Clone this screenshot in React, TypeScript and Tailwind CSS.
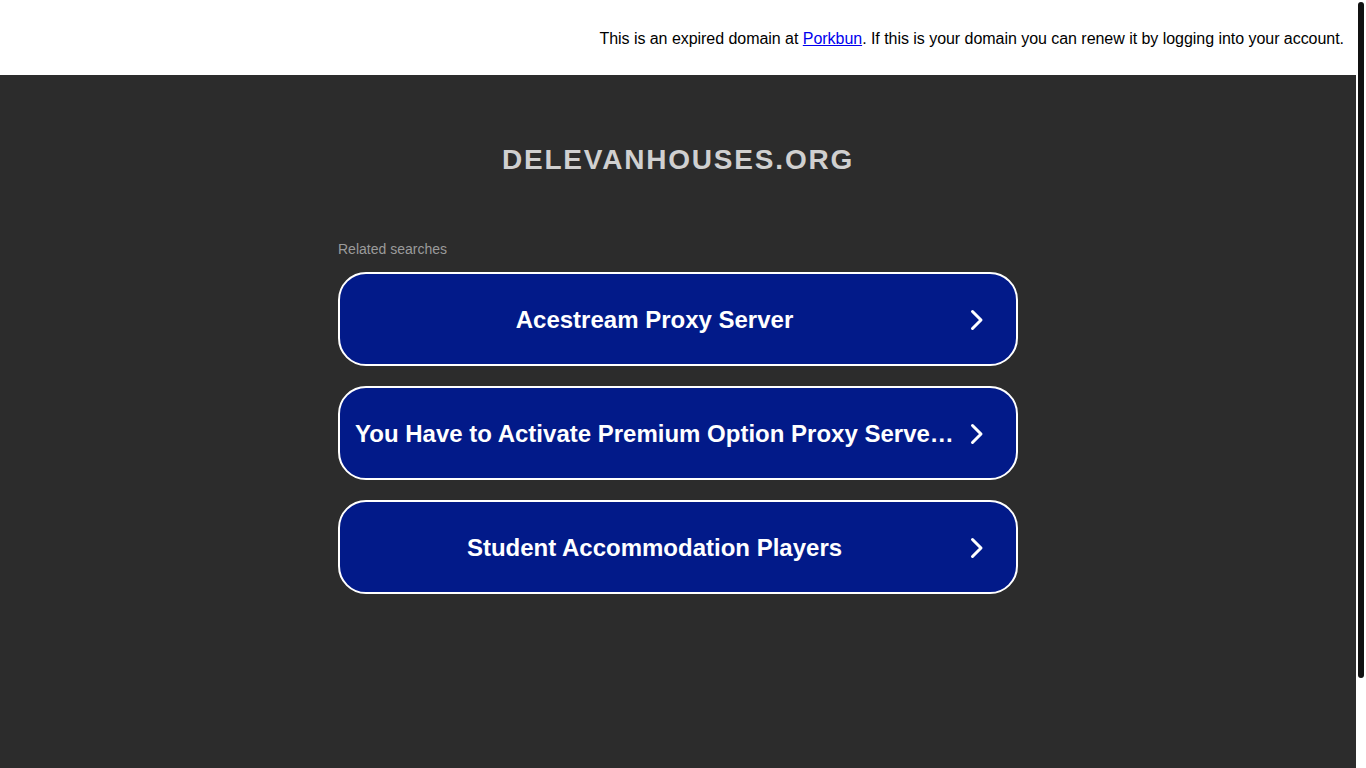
const SEARCHES = [
  'Acestream Proxy Server',
  'You Have to Activate Premium Option Proxy Server Free',
  'Student Accommodation Players',
];

function Chevron() {
  return (
    <svg width="16" height="24" viewBox="0 0 16 24" fill="none" aria-hidden="true">
      <path d="M3.5 3.5 L12 12 L3.5 20.5" stroke="#ffffff" strokeWidth="3" strokeLinecap="round" strokeLinejoin="round" />
    </svg>
  );
}

export default function App() {
  return (
    <div className="h-screen flex bg-white font-['Liberation_Sans',Arial,sans-serif] overflow-hidden">
      <div className="flex-1 min-w-0 bg-[#2c2c2c]">
        {/* expiry notice */}
        <div className="h-[75px] bg-white flex items-center justify-end pr-[12px] pt-[3px]">
          <p className="text-[16px] text-black tracking-[-0.04px]">
            This is an expired domain at{' '}
            <a href="#" className="text-[#0000ee] underline">
              Porkbun
            </a>
            . If this is your domain you can renew it by logging into your account.
          </p>
        </div>

        <div className="flex flex-col items-center">
          <h1 className="mt-[67px] text-[28px] font-bold tracking-[1.8px] text-[#d0d0d0] leading-[36px]">
            DELEVANHOUSES.ORG
          </h1>

          <div className="w-[680px] mt-[61px]">
            <div className="text-[14px] text-[#9b9b9b] leading-[20px]">Related searches</div>
            <div className="mt-[13px] flex flex-col gap-[20px]">
              {SEARCHES.map((s) => (
                <a
                  key={s}
                  href="#"
                  className="h-[94px] rounded-[28px] border-2 border-white bg-[#021a89] flex items-center pl-[15px] pr-[16px] pt-[2px]"
                >
                  <span className="flex-1 min-w-0 truncate text-center text-[24px] font-bold text-white">
                    {s}
                  </span>
                  <span className="w-[46px] flex justify-center shrink-0">
                    <Chevron />
                  </span>
                </a>
              ))}
            </div>
          </div>
        </div>
      </div>

      {/* scrollbar strip */}
      <div className="w-[10px] shrink-0 bg-white pt-[2px] pl-[2px]">
        <div className="w-[6px] h-[676px] rounded-full bg-[#111111]" />
      </div>
    </div>
  );
}
